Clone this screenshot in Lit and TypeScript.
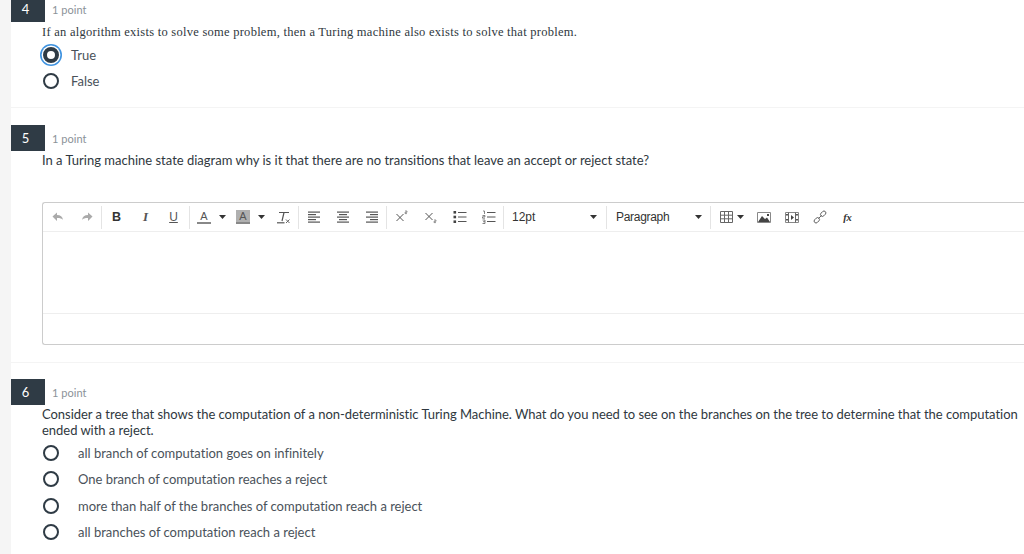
import { LitElement, html, css, svg } from "lit";
import { customElement } from "lit/decorators.js";

const sep = html`<span class="sep"></span>`;
const caret = html`<svg class="caret" width="7" height="4" viewBox="0 0 7 4"><path d="M0 0h7L3.5 4z" fill="#333"/></svg>`;
const ic = (w: number, body: unknown) => html`<svg width="${w}" height="14" viewBox="0 0 ${w} 14" fill="none">${body}</svg>`;
const lines = (rows: [number, number, number][]) => rows.map(([x, y, w]) => svg`<rect x="${x}" y="${y}" width="${w}" height="1.2" fill="#555"/>`);

@customElement("app-root")
export class AppRoot extends LitElement {
  static styles = css`
    :host { display: block; width: 1024px; height: 554px; overflow: hidden; background: #fff; font-family: Lato, sans-serif; color: #3c4650; }
    .page { border-left: 11px solid #f5f5f5; height: 554px; box-sizing: border-box; overflow: hidden; }
    .q { padding-left: 31px; border-bottom: 1px solid #f4f4f4; box-sizing: border-box; }
    .q.one { margin-top: -4px; height: 112px; }
    .q.two { height: 255px; padding-top: 17px; }
    .q.three { padding-top: 16px; border: 0; }
    .head { display: flex; align-items: center; margin-left: -36px; height: 26px; }
    .badge { width: 39px; height: 100%; background: #2f3b45; color: #fff; font-size: 13px; display: flex; align-items: center; justify-content: center; }
    .pts { margin-left: 7px; font-size: 11px; letter-spacing: 0.04px; color: #8b9299; }
    .text { font-size: 13px; line-height: 16px; color: #2f3840; }
    .serif { font-family: "Liberation Serif", serif; font-size: 12.5px; letter-spacing: 0.26px; margin-top: 2px; }
    .two .text { margin-top: 1px; }
    .three .text { margin-top: 1px; width: 982px; letter-spacing: -0.03px; }
    .opts { display: flex; flex-direction: column; }
    .opt { display: flex; align-items: center; height: 26.3px; font-size: 13px; color: #4a525a; }
    .radio { width: 16px; height: 16px; box-sizing: border-box; border: 2px solid #2f3b45; border-radius: 50%; background: #fff; flex: none; margin-left: 1px; }
    .radio.on { border: 4px solid #2f3b45; background: #fff; box-shadow: 0 0 0 1.4px #fff, 0 0 0 3px #3f93e0; }
    .lab { margin-left: 12px; }
    .wide .lab { margin-left: 19px; letter-spacing: -0.01px; }
    .one .opts { margin-top: 2px; }
    .three .opts { margin-top: 2px; }
    .editor { margin-top: 34px; margin-right: -12px; height: 143px; box-sizing: border-box; border: 1px solid #ccc; border-right: 0; border-radius: 3px 0 0 3px; display: flex; flex-direction: column; }
    .bar { height: 28px; border-bottom: 1px solid #eee; display: flex; align-items: center; font-family: "Liberation Sans", sans-serif; font-size: 12px; color: #333; flex: none; }
    .sep { width: 1px; height: 23px; background: #e4e4e4; flex: none; }
    .t { display: flex; align-items: center; justify-content: center; flex: none; height: 23px; box-sizing: border-box; }
    .ta { width: 29px; }
    .col1 { width: 28px; }
    .col2 { width: 22px; margin-left: 6px; }
    .clear { width: 33px; padding-left: 3px; }
    .tbl { width: 39px; justify-content: flex-start; padding-left: 9px; gap: 4px; }
    .w28 { width: 28px; }
    .fx { width: 27px; font: italic 700 10.5px "Liberation Serif", serif; color: #333; }
    .b { font-weight: 700; font-size: 12.5px; width: 29px; text-align: center; flex: none; }
    .i { font: italic 700 13px "Liberation Serif", serif; color: #555; width: 29px; text-align: center; flex: none; }
    .u { text-decoration: underline; width: 27px; margin-right: 2px; text-align: center; flex: none; color: #555; }
    .colr { width: 14px; text-align: center; border-bottom: 2px solid #888; line-height: 12px; font-size: 11px; color: #555; flex: none; }
    .colr.hl { background: #b0b0b0; }
    .gap1 { margin-left: 1px; }
    .gap2 { margin-left: 4px; }
    .drop { display: flex; align-items: center; justify-content: space-between; flex: none; box-sizing: border-box; }
    .size { width: 102px; padding: 0 9.5px 0 8px; }
    .para { width: 103px; padding: 0 8.5px 0 9px; letter-spacing: -0.3px; }
    .caret { flex: none; }
    .body { height: 81px; border-bottom: 1px solid #eee; flex: none; }
  `;

  render() {
    return html`<div class="page">
      <section class="q one">
        <div class="head"><div class="badge">4</div><div class="pts">1 point</div></div>
        <div class="text serif">If an algorithm exists to solve some problem, then a Turing machine also exists to solve that problem.</div>
        <div class="opts">
          <div class="opt"><span class="radio on"></span><span class="lab">True</span></div>
          <div class="opt"><span class="radio"></span><span class="lab">False</span></div>
        </div>
      </section>
      <section class="q two">
        <div class="head"><div class="badge">5</div><div class="pts">1 point</div></div>
        <div class="text">In a Turing machine state diagram why is it that there are no transitions that leave an accept or reject state?</div>
        <div class="editor">
          <div class="bar">
            <span class="t ta">${ic(14, svg`<path d="M1.500 6.500L6 2.500v2.500c3.500 0 5.500 1.500 6 5-1-1.500-3-2-6-2v3z" fill="#aaa"/>`)}</span>
            <span class="t ta">${ic(14, svg`<path d="M12.500 6.500L8 2.500v2.500c-3.500 0-5.500 1.500-6 5 1-1.500 3-2 6-2v3z" fill="#aaa"/>`)}</span>
            ${sep}
            <span class="b">B</span><span class="i">I</span><span class="u">U</span>
            ${sep}
            <span class="t col1"><span class="colr">A</span></span><span class="gap1"></span>${caret}
            <span class="t col2"><span class="colr hl">A</span></span><span class="gap2"></span>${caret}
            <span class="t clear">${ic(14, svg`<path d="M3 2.500h10M8 2.500L6 11" stroke="#555" stroke-width="1.200"/><path d="M1 12.800h7.500" stroke="#555" stroke-width="1.200"/><path d="M10 9.500l3.500 3.500M13.500 9.500L10 13" stroke="#666"/>`)}</span>
            ${sep}
            <span class="t ta">${ic(14, lines([[1,1.5,12],[1,4,8],[1,6.5,12],[1,9,8],[1,11.5,12]]))}</span>
            <span class="t ta">${ic(14, lines([[1,1.5,12],[3,4,8],[1,6.5,12],[3,9,8],[1,11.5,12]]))}</span>
            <span class="t ta">${ic(14, lines([[1,1.5,12],[5,4,8],[1,6.5,12],[5,9,8],[1,11.5,12]]))}</span>
            ${sep}
            <span class="t ta">${ic(14, svg`<path d="M1.500 4l7 7M8.500 4l-7 7" stroke="#555"/><path d="M10 1h2v1.300h-2V3.600h2" stroke="#555" stroke-width=".6"/>`)}</span>
            <span class="t ta">${ic(14, svg`<path d="M1.500 3l7 7M8.500 3l-7 7" stroke="#555"/><path d="M10 10h2v1.300h-2v1.300h2" stroke="#555" stroke-width=".6"/>`)}</span>
            <span class="t ta">${ic(14, svg`<rect x="0.500" y="1" width="2.600" height="2.600" fill="#444"/><rect x="0.500" y="5.700" width="2.600" height="2.600" fill="#444"/><rect x="0.500" y="10.400" width="2.600" height="2.600" fill="#444"/><path d="M5 2.500h8.500M5 7h8.500M5 11.500h8.500" stroke="#555"/>`)}</span>
            <span class="t ta">${ic(14, svg`<path d="M1 1h1.500v3M.500 5.500h2.500v1.300H.500v1.400H3M.500 10h2.500v3.500H.500M1 11.700h2" stroke="#555" stroke-width=".7"/><path d="M5 2.500h8.500M5 7h8.500M5 11.500h8.500" stroke="#555"/>`)}</span>
            ${sep}
            <span class="drop size"><span>12pt</span>${caret}</span>
            ${sep}
            <span class="drop para"><span>Paragraph</span>${caret}</span>
            ${sep}
            <span class="t tbl">${ic(13, svg`<path d="M.500 1.500h12v11H.500zM.500 5.200h12M.500 8.800h12M4.500 1.500v11M8.500 1.500v11" stroke="#666"/>`)}${caret}</span>
            <span class="t w28">${ic(14, svg`<path d="M.500 2.500h13v10H.500z" stroke="#888"/><path d="M1 12l4-6 3 3 2-1.500 3 4.500z" fill="#444"/><rect x="10" y="4" width="2" height="2" fill="#444"/>`)}</span>
            <span class="t w28">${ic(14, svg`<path d="M.500 2.500h13v10H.500z" stroke="#888"/><path d="M3.500 2.500v10M10.500 2.500v10" stroke="#666"/><path d="M6 5l3 2.500-3 2.500z" fill="#444"/><rect x="1" y="4" width="2" height="1.500" fill="#555"/><rect x="1" y="9" width="2" height="1.500" fill="#555"/><rect x="11" y="4" width="2" height="1.500" fill="#555"/><rect x="11" y="9" width="2" height="1.500" fill="#555"/>`)}</span>
            <span class="t w28">${ic(14, svg`<g stroke="#555" stroke-width=".9"><rect x="7.200" y="1.800" width="6" height="3.800" rx="1.900" transform="rotate(-45 10.200 3.700)"/><rect x="0.800" y="8.400" width="6" height="3.800" rx="1.900" transform="rotate(-45 3.800 10.300)"/><path d="M5.500 8.500l3-3"/></g>`)}</span>
            <span class="t fx">fx</span>
          </div>
          <div class="body"></div>
        </div>
      </section>
      <section class="q three">
        <div class="head"><div class="badge">6</div><div class="pts">1 point</div></div>
        <div class="text">Consider a tree that shows the computation of a non-deterministic Turing Machine. What do you need to see on the branches on the tree to determine that the computation ended with a reject.</div>
        <div class="opts wide">
          <div class="opt"><span class="radio"></span><span class="lab">all branch of computation goes on infinitely</span></div>
          <div class="opt"><span class="radio"></span><span class="lab">One branch of computation reaches a reject</span></div>
          <div class="opt"><span class="radio"></span><span class="lab">more than half of the branches of computation reach a reject</span></div>
          <div class="opt"><span class="radio"></span><span class="lab">all branches of computation reach a reject</span></div>
        </div>
      </section>
    </div>`;
  }
}
